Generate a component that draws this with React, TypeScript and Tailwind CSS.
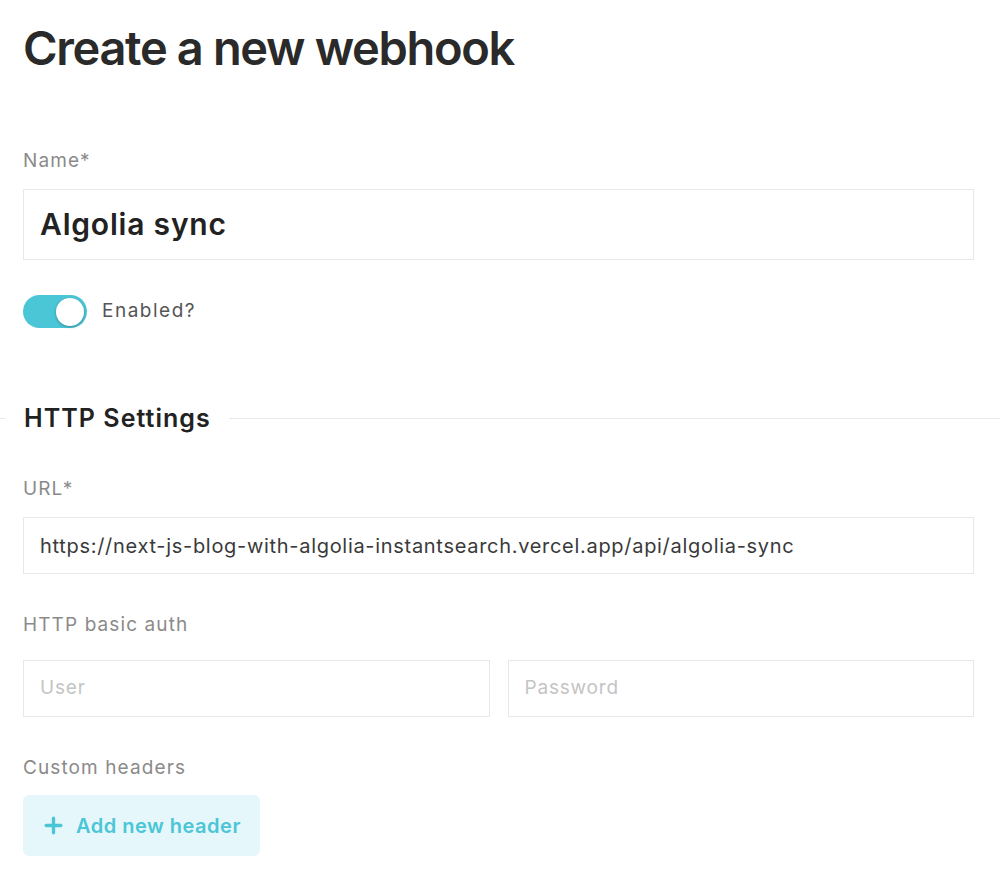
import { Plus } from "lucide-react";

const font = { fontFamily: "Inter, 'Noto Sans', sans-serif" };

function Label({ children }: { children: React.ReactNode }) {
  return <div className="text-[19px] leading-none tracking-[1.1px] text-[#8a8a8a]">{children}</div>;
}

export default function App() {
  return (
    <div className="bg-white min-h-[886px] w-[1000px] overflow-hidden" style={font}>
      <div className="pl-[23px] pr-[26px]">
        <h1 className="pt-[25px] text-[47px] leading-[46px] font-semibold tracking-[-1.35px] text-[#2a2a2a]">
          Create a new webhook
        </h1>

        <div className="mt-[80px]">
          <Label>Name*</Label>
          <div className="mt-[19px] h-[71px] border border-[#e8e8e8] flex items-center px-[16px]">
            <span className="text-[30px] font-semibold text-[#222] tracking-[0.8px]">Algolia sync</span>
          </div>
        </div>

        <div className="mt-[35px] flex items-center gap-[15px]">
          <div className="w-[64px] h-[33px] rounded-full bg-[#4ac6d6] flex items-center justify-end pr-[3px]">
            <div className="w-[28px] h-[28px] rounded-full bg-white shadow-[0_1px_3px_rgba(0,0,0,0.3)]" />
          </div>
          <span className="text-[19px] tracking-[1.5px] text-[#555]">Enabled?</span>
        </div>
      </div>

      <div className="mt-[70px] relative flex items-center">
        <div className="absolute left-0 right-0 top-[20px] h-px bg-[#e8e8e8]" />
        <div className="relative ml-[5px] bg-white pl-[19px] pr-[18px]">
          <span className="text-[25px] font-semibold text-[#222] leading-[40px] tracking-[1.05px]">HTTP Settings</span>
        </div>
      </div>

      <div className="pl-[23px] pr-[26px]">
        <div className="mt-[41px]">
          <Label>URL*</Label>
          <div className="mt-[19px] h-[57px] border border-[#e8e8e8] flex items-center px-[16px]">
            <span className="text-[20px] tracking-[0.7px] text-[#3a3a3a]">
              https://next-js-blog-with-algolia-instantsearch.vercel.app/api/algolia-sync
            </span>
          </div>
        </div>

        <div className="mt-[41px]">
          <Label>HTTP basic auth</Label>
          <div className="mt-[26px] grid grid-cols-2 gap-[18px]">
            <div className="h-[57px] border border-[#e8e8e8] flex items-center px-[16px]">
              <span className="text-[19px] tracking-[0.8px] text-[#c4c4c4]">User</span>
            </div>
            <div className="h-[57px] border border-[#e8e8e8] flex items-center px-[16px]">
              <span className="text-[19px] tracking-[0.8px] text-[#c4c4c4]">Password</span>
            </div>
          </div>
        </div>

        <div className="mt-[41px]">
          <Label>Custom headers</Label>
          <button className="mt-[18px] h-[61px] w-[237px] rounded-[6px] bg-[#e6f7fb] flex items-center pl-[18px] gap-[10px]">
            <Plus size={25} strokeWidth={3.2} className="text-[#4ac6d6]" />
            <span className="text-[20px] font-semibold tracking-[0.5px] text-[#4ac6d6]">Add new header</span>
          </button>
        </div>
      </div>
    </div>
  );
}
